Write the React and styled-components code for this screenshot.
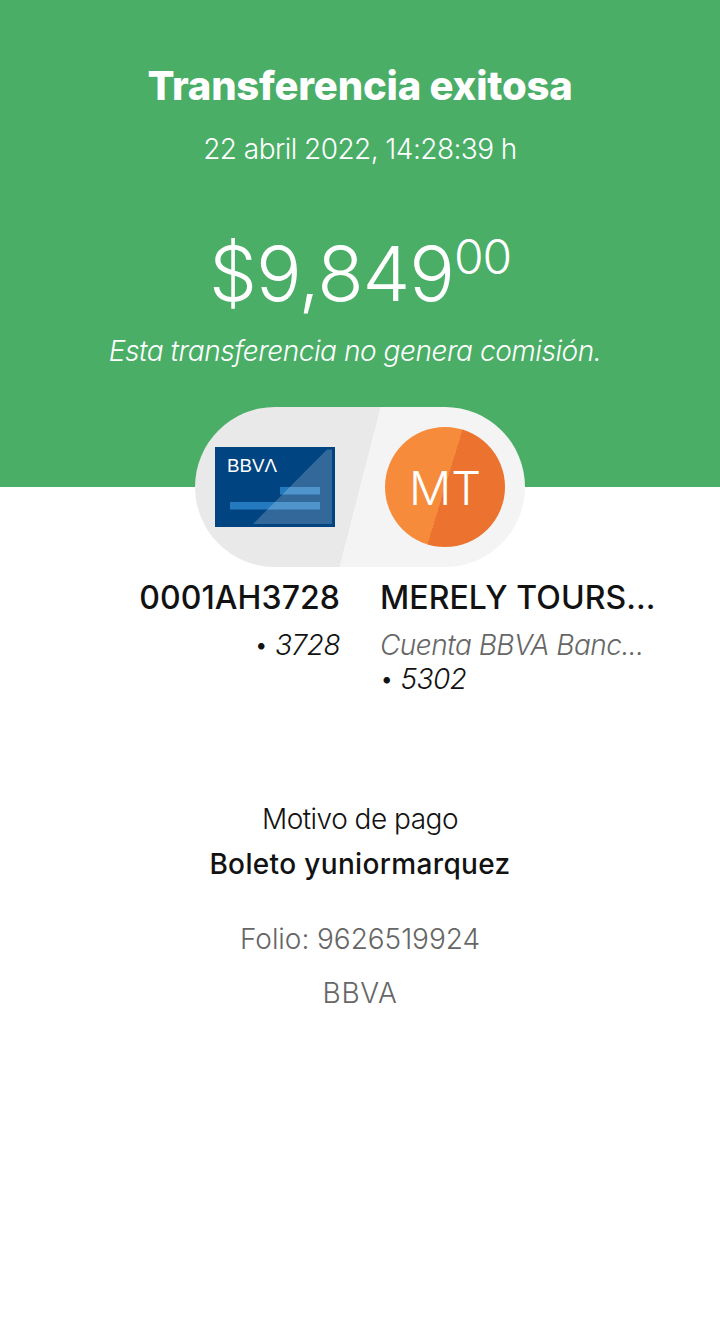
import React from "react";
import styled, { createGlobalStyle } from "styled-components";

const Global = createGlobalStyle`
  html, body { margin: 0; padding: 0; background: #fff; }
  body { font-family: "Inter", "Liberation Sans", sans-serif; }
`;

const Page = styled.main`
  width: 720px;
  height: 1317px;
  overflow: hidden;
  display: flex;
  flex-direction: column;
  align-items: center;
  background: #fff;
`;

const Hero = styled.header`
  width: 100%;
  height: 487px;
  box-sizing: border-box;
  padding-top: 60px;
  background: #4aae67;
  color: #fff;
  text-align: center;
  display: flex;
  flex-direction: column;
  align-items: center;
`;

const Title = styled.h1`
  margin: 0;
  font-size: 40px;
  line-height: 52px;
  font-weight: 800;
  letter-spacing: -0.2px;
`;

const DateLine = styled.p`
  margin: 15px 0 0;
  font-size: 28px;
  line-height: 44px;
  font-weight: 300;
  letter-spacing: -0.55px;
`;

const Amount = styled.div`
  margin-top: 56px;
  font-size: 76px;
  line-height: 92px;
  font-weight: 300;
  letter-spacing: -1.1px;
  display: flex;
  align-items: flex-start;
`;

const Cents = styled.span`
  font-size: 48px;
  line-height: 60px;
`;

const Note = styled.p`
  margin: 10px 10px 0 0;
  font-size: 28px;
  line-height: 44px;
  font-weight: 300;
  font-style: italic;
  letter-spacing: -0.45px;
`;

const Pill = styled.div`
  width: 330px;
  height: 160px;
  margin-top: -80px;
  border-radius: 80px;
  flex: none;
  display: flex;
  align-items: center;
  justify-content: space-between;
  box-sizing: border-box;
  padding: 0 20px;
  background: linear-gradient(104.4deg, #e9e9e9 50%, #f4f4f4 50%);
`;

const Avatar = styled.div`
  width: 120px;
  height: 120px;
  border-radius: 50%;
  display: flex;
  align-items: center;
  justify-content: center;
  color: #fff;
  font-size: 47px;
  font-weight: 300;
  background: linear-gradient(107deg, #f68b3c 50%, #eb722f 50%);
`;

const Parties = styled.section`
  width: 100%;
  margin-top: 8px;
  display: grid;
  grid-template-columns: 340px 280px;
  column-gap: 40px;
`;

const Party = styled.div`
  text-align: ${(p) => p.$align};
`;

const PartyName = styled.div`
  margin-bottom: 7px;
  font-size: 32px;
  line-height: 46px;
  font-weight: 450;
  color: #121212;
  letter-spacing: 0.07px;
`;

const PartyLine = styled.div`
  font-size: 28px;
  line-height: 34px;
  font-weight: 300;
  font-style: italic;
  letter-spacing: -0.5px;
  color: ${(p) => p.$color || "#121212"};
`;

const Bullet = styled.span`
  font-size: 24px;
  font-style: normal;
  vertical-align: 2px;
`;

const Details = styled.section`
  margin-top: 101px;
  text-align: center;
  display: flex;
  flex-direction: column;
  align-items: center;
`;

const Reason = styled.div`
  font-size: 28px;
  line-height: 44px;
  font-weight: 300;
  letter-spacing: -0.5px;
  color: #121212;
`;

const ReasonValue = styled.div`
  font-size: 28px;
  line-height: 46px;
  font-weight: 450;
  letter-spacing: 0.35px;
  color: #121212;
`;

const Meta = styled.div`
  margin-top: ${(p) => p.$top}px;
  font-size: 28px;
  line-height: 44px;
  font-weight: 300;
  letter-spacing: ${(p) => p.$spacing}px;
  color: #666;
`;

const Card = () => (
  <svg width="120" height="80" viewBox="0 0 120 80">
    <rect width="120" height="80" fill="#004481" />
    <rect x="65" y="40" width="40" height="7.5" fill="#237abf" />
    <rect x="15" y="55" width="90" height="7.5" fill="#237abf" />
    <path d="M38 77 L112 2.5 H117 V77 Z" fill="#fff" fillOpacity="0.2" />
    <text x="12" y="24.7" fill="#fff" fontFamily="Liberation Sans, sans-serif" fontSize="18" textLength="50" lengthAdjust="spacingAndGlyphs">BBVΛ</text>
  </svg>
);

export default function App() {
  return (
    <Page>
      <Global />
      <Hero>
        <Title>Transferencia exitosa</Title>
        <DateLine>22 abril 2022, 14:28:39 h</DateLine>
        <Amount>$9,849<Cents>00</Cents></Amount>
        <Note>Esta transferencia no genera comisión.</Note>
      </Hero>
      <Pill>
        <Card />
        <Avatar>MT</Avatar>
      </Pill>
      <Parties>
        <Party $align="right">
          <PartyName>0001AH3728</PartyName>
          <PartyLine><Bullet>•</Bullet> 3728</PartyLine>
        </Party>
        <Party $align="left">
          <PartyName>MERELY TOURS...</PartyName>
          <PartyLine $color="#666">Cuenta BBVA Banc...</PartyLine>
          <PartyLine><Bullet>•</Bullet> 5302</PartyLine>
        </Party>
      </Parties>
      <Details>
        <Reason>Motivo de pago</Reason>
        <ReasonValue>Boleto yuniormarquez</ReasonValue>
        <Meta $top={30} $spacing={-0.05}>Folio: 9626519924</Meta>
        <Meta $top={10} $spacing={0.7}>BBVA</Meta>
      </Details>
    </Page>
  );
}
